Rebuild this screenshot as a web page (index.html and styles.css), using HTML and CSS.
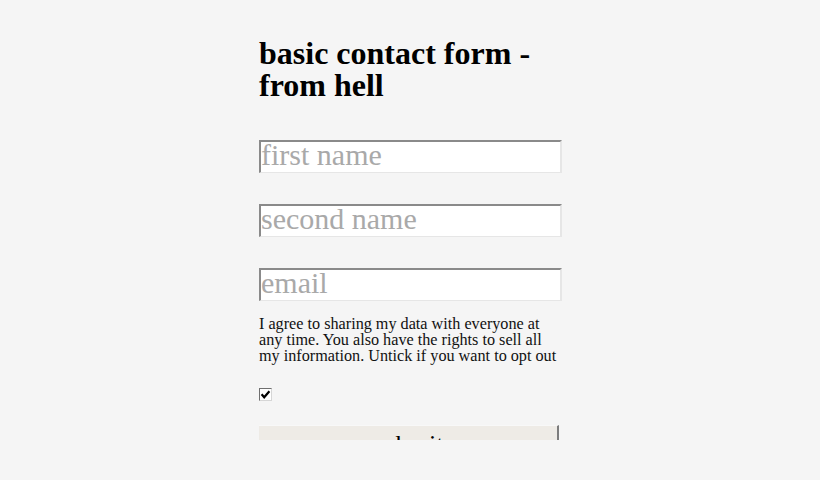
FILE: index.html
```html
<!DOCTYPE html>
<html>
<head>
<meta charset="utf-8">
<link rel="stylesheet" href="styles.css">
</head>
<body>
<div class="viewport">
  <form class="form">
    <h1 class="title">basic contact form - from hell</h1>
    <input class="field" type="text" placeholder="first name">
    <input class="field" type="text" placeholder="second name">
    <input class="field" type="text" placeholder="email">
    <p class="consent">I agree to sharing my data with everyone at any time. You also have the rights to sell all my information. Untick if you want to opt out</p>
    <label class="check">
      <svg width="11" height="11" viewBox="0 0 11 11"><path d="M1.6 5.2 L4.2 8.2 L9.4 2.2" fill="none" stroke="#000" stroke-width="2.2"/></svg>
    </label>
    <button class="submit" type="button">submit</button>
  </form>
</div>
</body>
</html>
```

FILE: styles.css
```css
html, body {
  margin: 0;
  padding: 0;
  background: #f5f5f5;
}
.viewport {
  height: 440px;
  overflow: hidden;
}
.form {
  width: 302px;
  margin: 0 auto;
  padding-top: 37px;
  display: flex;
  flex-direction: column;
  align-items: flex-start;
  font-family: "Liberation Serif", "Times New Roman", serif;
}
.title {
  margin: 0 0 39px 0;
  font-size: 32px;
  line-height: 32px;
  font-weight: bold;
  color: #000;
}
.field {
  box-sizing: border-box;
  width: 303px;
  height: 33px;
  margin: 0 0 31px 0;
  padding: 0 0 4px 0;
  font-family: "Liberation Serif", "Times New Roman", serif;
  font-size: 30px;
  line-height: 30px;
  background: #fff;
  border-style: solid;
  border-width: 2px 2px 1px 2px;
  border-color: #8a8a8a #e6e6e6 #e6e6e6 #8a8a8a;
  outline: none;
}
.field::placeholder {
  color: #a9a9a9;
}
.field:nth-of-type(3) {
  margin-bottom: 15px;
}
.consent {
  margin: 0 0 24px 0;
  font-size: 16.2px;
  line-height: 16px;
  color: #111;
}
.check {
  box-sizing: border-box;
  width: 13px;
  height: 13px;
  border-style: solid;
  border-width: 1px;
  border-color: #6f6f6f #d6d6d6 #d6d6d6 #6f6f6f;
  background: #fff;
  display: flex;
  align-items: center;
  justify-content: center;
}
.check svg {
  display: block;
}
.submit {
  box-sizing: border-box;
  width: 300px;
  margin-top: 24px;
  padding: 4px 0 4px 0;
  font-family: "Liberation Serif", "Times New Roman", serif;
  font-size: 26px;
  line-height: 30px;
  background: #eeebe6;
  border-style: solid;
  border-width: 1px 2px 2px 0;
  border-color: #f8f8f8 #7c7c7c #7c7c7c #f8f8f8;
  color: #000;
  text-align: center;
}
```
